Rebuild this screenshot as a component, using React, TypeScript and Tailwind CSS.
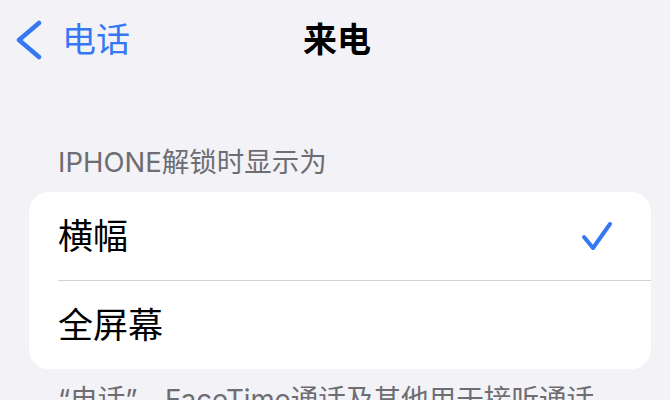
import React from "react";

const font = { fontFamily: '"Inter", "Noto Sans CJK SC", sans-serif' };

export default function App() {
  return (
    <div className="w-[670px] h-[400px] overflow-hidden bg-[#f2f2f7]" style={font}>
      <div className="grid grid-cols-[1fr_auto_1fr] items-center h-[80px]">
        <div className="flex items-center pl-[16px] gap-[20px] text-[#3478f6]">
          <svg width="26" height="40" viewBox="0 0 26 40" className="shrink-0">
            <polyline
              points="23,3 3,20 23,37"
              fill="none"
              stroke="#3478f6"
              strokeWidth="4.5"
              strokeLinecap="round"
              strokeLinejoin="round"
            />
          </svg>
          <span className="text-[34px] leading-[40px]">电话</span>
        </div>
        <div className="text-[34px] leading-[40px] font-semibold text-black pl-[4px]">来电</div>
        <div />
      </div>

      <div className="mt-[66px] pl-[58px] text-[27.5px] leading-[32px] text-[#6d6d72]">IPHONE解锁时显示为</div>

      <div className="mt-[14px] ml-[29px] mr-[19px] bg-white rounded-[20px] overflow-hidden">
        <div className="h-[88px] flex items-center justify-between pl-[29px] pr-[37px]">
          <span className="text-[35px] leading-[40px] text-black">横幅</span>
          <svg width="34" height="34" viewBox="0 0 34 34">
            <polyline
              points="4,18 13,29 30,5"
              fill="none"
              stroke="#3478f6"
              strokeWidth="4"
              strokeLinecap="round"
              strokeLinejoin="round"
            />
          </svg>
        </div>
        <div className="ml-[29px] h-[1px] bg-[#d1d1d6]" />
        <div className="h-[88px] flex items-center pl-[29px]">
          <span className="text-[35px] leading-[40px] text-black">全屏幕</span>
        </div>
      </div>

      <div className="mt-[14px] pl-[58px] text-[27.6px] leading-[32px] text-[#6d6d72] whitespace-nowrap">
        “电话”、FaceTime通话及其他用于接听通话
      </div>
    </div>
  );
}
